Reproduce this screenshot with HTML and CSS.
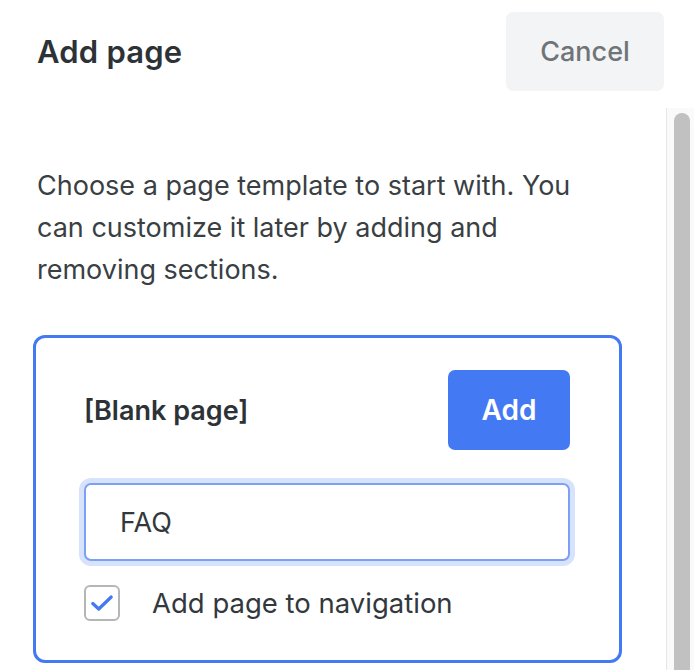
FILE: index.html
```html
<!DOCTYPE html>
<html lang="en">
<head>
<meta charset="utf-8">
<title>Add page</title>
<link rel="stylesheet" href="styles.css">
</head>
<body>
<div class="panel">
  <header class="panel-header">
    <h1 class="panel-title">Add page</h1>
    <button class="btn-cancel" type="button">Cancel</button>
  </header>
  <div class="panel-main">
    <div class="panel-content">
      <p class="intro">Choose a page template to start with. You can customize it later by adding and removing sections.</p>
      <section class="template-card">
        <div class="card-head">
          <h2 class="card-title">[Blank page]</h2>
          <button class="btn-add" type="button">Add</button>
        </div>
        <input class="page-name" type="text" value="FAQ">
        <label class="nav-option">
          <span class="checkbox">
            <svg viewBox="0 0 24 24" width="26" height="26"><path d="M3.5 12.5L9 17.5L20.5 6.5" fill="none" stroke="#4479f4" stroke-width="3" stroke-linecap="round" stroke-linejoin="round"/></svg>
          </span>
          <span class="nav-label">Add page to navigation</span>
        </label>
      </section>
    </div>
    <div class="scrollbar"><div class="scrollbar-thumb"></div></div>
  </div>
</div>
</body>
</html>
```
FILE: styles.css
```css
html, body {
  margin: 0;
  padding: 0;
  background: #ffffff;
}
body {
  width: 694px;
  height: 670px;
  overflow: hidden;
  font-family: Inter, "Noto Sans", sans-serif;
  color: #33383d;
}
.panel {
  width: 694px;
  height: 670px;
  display: flex;
  flex-direction: column;
}
.panel-header {
  height: 108px;
  flex: none;
  display: flex;
  align-items: center;
  justify-content: space-between;
  padding: 12px 30px 17px 37px;
  box-sizing: border-box;
}
.panel-title {
  margin: 0;
  font-size: 31px;
  line-height: 36px;
  font-weight: 600;
  letter-spacing: 0.2px;
  color: #2d3237;
}
.btn-cancel {
  width: 158px;
  height: 79px;
  border: none;
  border-radius: 7px;
  background: #f3f4f5;
  color: #6f7479;
  font-family: inherit;
  font-size: 27px;
  font-weight: 500;
  padding: 0;
}
.panel-main {
  flex: 1;
  display: flex;
  min-height: 0;
}
.panel-content {
  flex: 1;
  overflow: hidden;
  padding: 57px 0 0 33px;
}
.intro {
  margin: 0 0 44px 4px;
  max-width: 565px;
  font-size: 27px;
  line-height: 42px;
  color: #3a3f44;
}
.template-card {
  width: 589px;
  box-sizing: border-box;
  border: 3px solid #4479f4;
  border-radius: 12px;
  padding: 32px 49px 39px 48px;
}
.card-head {
  display: flex;
  align-items: center;
  justify-content: space-between;
}
.card-title {
  margin: 0;
  font-size: 27px;
  font-weight: 600;
  color: #2d3237;
}
.btn-add {
  width: 122px;
  height: 80px;
  border: none;
  border-radius: 7px;
  background: #4479f4;
  color: #ffffff;
  font-family: inherit;
  font-size: 28px;
  font-weight: 600;
  padding: 0;
}
.page-name {
  display: block;
  box-sizing: border-box;
  width: 100%;
  height: 78px;
  margin-top: 33px;
  padding: 0 0 0 34px;
  border: 2px solid #7ca1f2;
  border-radius: 7px;
  box-shadow: 0 0 0 5px #d7e3fc;
  outline: none;
  font-family: inherit;
  font-size: 27px;
  color: #33383d;
}
.nav-option {
  display: flex;
  align-items: center;
  gap: 32px;
  margin-top: 24px;
  height: 36px;
}
.checkbox {
  width: 36px;
  height: 36px;
  box-sizing: border-box;
  border: 2px solid #b5b6b8;
  border-radius: 6px;
  display: flex;
  align-items: center;
  justify-content: center;
}
.nav-label {
  font-size: 27.5px;
  line-height: 36px;
  color: #33383d;
}
.scrollbar {
  width: 28px;
  flex: none;
  box-sizing: border-box;
  background: #fafafa;
  border-left: 1px solid #e6e6e6;
  padding: 5px 4px 0 7px;
}
.scrollbar-thumb {
  height: 640px;
  background: #c1c1c1;
  border-radius: 8px;
}
```
